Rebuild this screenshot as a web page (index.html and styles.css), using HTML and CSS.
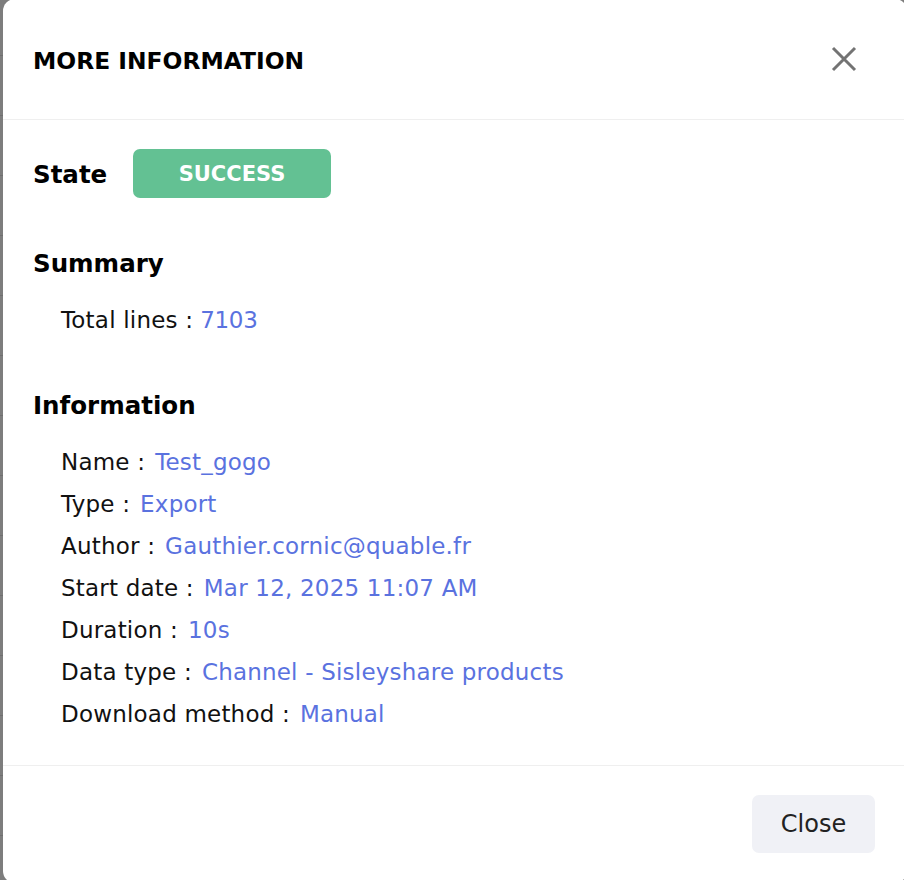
FILE: index.html
```html
<!DOCTYPE html>
<html lang="en">
<head>
<meta charset="utf-8">
<title>More information</title>
<link rel="stylesheet" href="styles.css">
</head>
<body>
<div class="modal">
  <div class="modal-header">
    <h1 class="modal-title">MORE INFORMATION</h1>
    <button class="icon-close" aria-label="Close">
      <svg width="26" height="26" viewBox="0 0 26 26"><path d="M2 2 L24 24 M24 2 L2 24" stroke="#737373" stroke-width="3" fill="none"/></svg>
    </button>
  </div>
  <div class="modal-body">
    <div class="state-row">
      <h2 class="section-title state-label">State</h2>
      <span class="badge">SUCCESS</span>
    </div>
    <h2 class="section-title section">Summary</h2>
    <div class="rows">
      <div class="row"><span class="label">Total lines :</span><span class="value tight">7103</span></div>
    </div>
    <h2 class="section-title section">Information</h2>
    <div class="rows">
      <div class="row"><span class="label">Name :</span><span class="value">Test_gogo</span></div>
      <div class="row"><span class="label">Type :</span><span class="value">Export</span></div>
      <div class="row"><span class="label">Author :</span><span class="value">Gauthier.cornic@quable.fr</span></div>
      <div class="row"><span class="label">Start date :</span><span class="value">Mar 12, 2025 11:07 AM</span></div>
      <div class="row"><span class="label">Duration :</span><span class="value">10s</span></div>
      <div class="row"><span class="label">Data type :</span><span class="value">Channel - Sisleyshare products</span></div>
      <div class="row"><span class="label">Download method :</span><span class="value">Manual</span></div>
    </div>
  </div>
  <div class="modal-footer">
    <button class="btn-close">Close</button>
  </div>
</div>
</body>
</html>
```
FILE: styles.css
```css
html, body {
  margin: 0;
  padding: 0;
  overflow: hidden;
  height: 880px;
}
body {
  background-color: #7d7d7d;
  background-image: repeating-linear-gradient(to bottom, transparent 0, transparent 59px, #6f6f6f 59px, #6f6f6f 60px);
  background-position: 0 -4px;
  font-family: "DejaVu Sans", "Open Sans", sans-serif;
  color: #111;
}
.modal {
  margin-left: 3px;
  margin-top: -1px;
  width: 904px;
  height: 884px;
  background: #fff;
  border-radius: 12px;
  display: flex;
  flex-direction: column;
}
.modal-header {
  height: 121px;
  box-sizing: border-box;
  border-bottom: 1px solid #efefef;
  padding: 3px 50px 0 30px;
  display: flex;
  align-items: center;
  justify-content: space-between;
}
.modal-title {
  margin: 0;
  font-size: 23.4px;
  font-weight: 700;
  color: #000;
}
.icon-close {
  border: 0;
  background: none;
  padding: 0;
  margin-top: -3px;
  width: 26px;
  height: 26px;
  display: flex;
  cursor: pointer;
}
.modal-body {
  padding: 29px 30px 0 30px;
  height: 646px;
  box-sizing: border-box;
  border-bottom: 1px solid #efefef;
}
.state-row {
  display: flex;
  align-items: center;
  height: 49px;
}
.state-label {
  width: 100px;
  padding-top: 2px;
}
.section-title {
  margin: 0;
  font-size: 24.5px;
  font-weight: 700;
  color: #000;
  line-height: 36px;
  padding-top: 2px;
}
.state-row + .section {
  margin-top: 46px;
}
.rows + .section {
  margin-top: 45px;
}
.badge {
  width: 198px;
  height: 49px;
  border-radius: 7px;
  background: #63c193;
  color: #fff;
  font-weight: 700;
  font-size: 21px;
  display: flex;
  align-items: center;
  justify-content: center;
}
.rows {
  margin-top: 17px;
  padding-left: 28px;
}
.row {
  height: 42px;
  line-height: 42px;
  font-size: 23px;
  letter-spacing: 0.2px;
  white-space: nowrap;
}
.value {
  color: #5a72df;
  margin-left: 10px;
}
.value.tight {
  margin-left: 7px;
  letter-spacing: -0.3px;
}
.modal-footer {
  display: flex;
  justify-content: flex-end;
  padding: 29px 32px 0 0;
}
.btn-close {
  width: 123px;
  height: 58px;
  border: 0;
  border-radius: 7px;
  background: #f0f1f6;
  font-family: inherit;
  font-size: 24px;
  color: #222;
  cursor: pointer;
}
```
